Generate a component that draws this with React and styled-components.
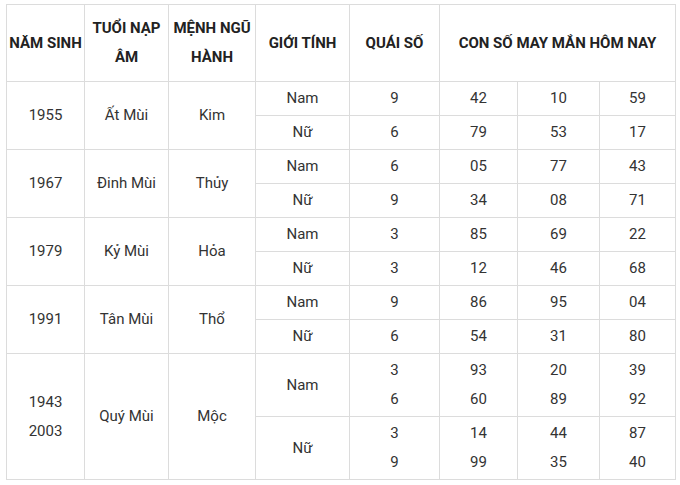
import React from "react";
import styled, { createGlobalStyle } from "styled-components";

const Global = createGlobalStyle`
  html, body { margin: 0; padding: 0; background: #fff; }
  body { font-family: Roboto, "Noto Sans", Arial, sans-serif; }
`;

const Wrap = styled.div`
  padding: 4px 0 0 6px;
`;

const Table = styled.table`
  border-collapse: collapse;
  table-layout: fixed;
  width: 669px;
  font-size: 15px;
  color: #333;
`;

const Th = styled.th`
  border: 1px solid #dcdcdc;
  font-weight: 700;
  color: #222;
  text-align: center;
  vertical-align: middle;
  line-height: 29px;
  height: 77px;
  padding: 0 1px;
  box-sizing: border-box;
`;

const Td = styled.td`
  border: 1px solid #dcdcdc;
  text-align: center;
  vertical-align: middle;
  line-height: 29px;
  height: ${(p) => (p.$tall ? 63 : 34)}px;
  padding: 0 4px;
  box-sizing: border-box;
`;

const widths = [78, 84, 87, 94, 90, 78, 82, 76];

const groups = [
  { year: ["1955"], tuoi: "Ất Mùi", menh: "Kim", rows: [["Nam", ["9"], [["42"], ["10"], ["59"]]], ["Nữ", ["6"], [["79"], ["53"], ["17"]]]] },
  { year: ["1967"], tuoi: "Đinh Mùi", menh: "Thủy", rows: [["Nam", ["6"], [["05"], ["77"], ["43"]]], ["Nữ", ["9"], [["34"], ["08"], ["71"]]]] },
  { year: ["1979"], tuoi: "Kỷ Mùi", menh: "Hỏa", rows: [["Nam", ["3"], [["85"], ["69"], ["22"]]], ["Nữ", ["3"], [["12"], ["46"], ["68"]]]] },
  { year: ["1991"], tuoi: "Tân Mùi", menh: "Thổ", rows: [["Nam", ["9"], [["86"], ["95"], ["04"]]], ["Nữ", ["6"], [["54"], ["31"], ["80"]]]] },
  { year: ["1943", "2003"], tuoi: "Quý Mùi", menh: "Mộc", tall: true, rows: [["Nam", ["3", "6"], [["93", "60"], ["20", "89"], ["39", "92"]]], ["Nữ", ["3", "9"], [["14", "99"], ["44", "35"], ["87", "40"]]]] },
];

const Lines = ({ items }) =>
  items.map((t, i) => (
    <React.Fragment key={i}>
      {i > 0 && <br />}
      {t}
    </React.Fragment>
  ));

export default function App() {
  return (
    <>
      <Global />
      <Wrap>
        <Table>
          <colgroup>
            {widths.map((w, i) => (
              <col key={i} style={{ width: w }} />
            ))}
          </colgroup>
          <thead>
            <tr>
              <Th>NĂM SINH</Th>
              <Th>TUỔI NẠP ÂM</Th>
              <Th>MỆNH NGŨ HÀNH</Th>
              <Th>GIỚI TÍNH</Th>
              <Th>QUÁI SỐ</Th>
              <Th colSpan={3}>CON SỐ MAY MẮN HÔM NAY</Th>
            </tr>
          </thead>
          <tbody>
            {groups.map((g, gi) =>
              g.rows.map((r, ri) => (
                <tr key={`${gi}-${ri}`}>
                  {ri === 0 && (
                    <>
                      <Td rowSpan={2}><Lines items={g.year} /></Td>
                      <Td rowSpan={2}>{g.tuoi}</Td>
                      <Td rowSpan={2}>{g.menh}</Td>
                    </>
                  )}
                  <Td $tall={g.tall}>{r[0]}</Td>
                  <Td $tall={g.tall}><Lines items={r[1]} /></Td>
                  {r[2].map((n, ni) => (
                    <Td key={ni} $tall={g.tall}><Lines items={n} /></Td>
                  ))}
                </tr>
              ))
            )}
          </tbody>
        </Table>
      </Wrap>
    </>
  );
}
